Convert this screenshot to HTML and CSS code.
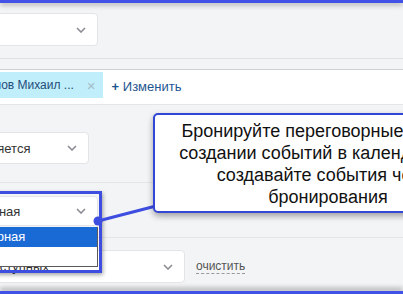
FILE: index.html
```html
<!DOCTYPE html>
<html>
<head>
  <title>Бронирование переговорных</title>
  <link rel="stylesheet" href="styles.css">
</head>
<body>
  <div class="frame-top"></div>

  <div class="section section-top">
    <div class="select select-top">
      <span class="select-text">Основной</span>
      <svg class="chevron" width="10" height="6" viewBox="0 0 10 6"><path d="M1 1l4 4 4-4" fill="none" stroke="#8a8d93" stroke-width="1.6"/></svg>
    </div>
  </div>
  <div class="band"></div>

  <div class="section section-white">
    <div class="chip">
      <span class="chip-text">Иванов Михаил ...</span>
      <span class="chip-close">×</span>
    </div>
    <a class="change-link" href="#"><b>+</b> Изменить</a>
  </div>

  <div class="section section-form">
    <div class="row row-repeat">
      <div class="select select-repeat">
        <span class="select-text">Не повторяется</span>
        <svg class="chevron" width="10" height="6" viewBox="0 0 10 6"><path d="M1 1l4 4 4-4" fill="none" stroke="#8a8d93" stroke-width="1.6"/></svg>
      </div>
    </div>

    <div class="row row-type">
      <div class="hl-wrap">
        <div class="select select-type">
          <span class="select-text">Переговорная</span>
          <svg class="chevron" width="10" height="6" viewBox="0 0 10 6"><path d="M1 1l4 4 4-4" fill="none" stroke="#8a8d93" stroke-width="1.6"/></svg>
        </div>
        <div class="menu">
          <div class="menu-item active">Переговорная</div>
          <div class="menu-item"></div>
        </div>
        <div class="hl-frame"></div>
      </div>
    </div>

    <div class="row row-room">
      <div class="select select-room">
        <span class="select-text">Из доступных</span>
        <svg class="chevron" width="10" height="6" viewBox="0 0 10 6"><path d="M1 1l4 4 4-4" fill="none" stroke="#8a8d93" stroke-width="1.6"/></svg>
      </div>
      <a class="clear-link" href="#">очистить</a>
    </div>
  </div>

  <div class="frame-bottom"></div>

  <!-- annotation -->
  <svg class="pointer" width="403" height="294" viewBox="0 0 403 294">
    <line x1="98" y1="221" x2="156" y2="206" stroke="#3d4de0" stroke-width="3"/>
    <circle cx="98" cy="221" r="4.5" fill="#3d4de0"/>
  </svg>
  <div class="callout">
    Бронируйте переговорные уже при<br>
    создании событий в календаре или<br>
    создавайте события через<br>
    бронирования
  </div>
</body>
</html>
```

FILE: styles.css
```css
body {
  margin: 0;
  width: 403px;
  height: 294px;
  overflow: hidden;
  position: relative;
  font-family: "Liberation Sans", Arial, sans-serif;
  font-size: 13px;
  color: #333333;
  background-color: #f3f4f6;
}

.frame-top {
  height: 3px;
  background-color: #4352e6;
  box-shadow: 0 2px 5px rgba(0, 0, 0, 0.35);
  position: relative;
  z-index: 2;
}

.frame-bottom {
  height: 4px;
  background-color: #4352e6;
  box-shadow: 0 -3px 5px rgba(0, 0, 0, 0.3);
  position: relative;
  z-index: 2;
}

.section-top {
  padding: 10px 0 12px;
  border-bottom: 1px solid #dfe1e4;
}

.band {
  height: 10px;
  border-bottom: 1px solid #cdd0d4;
}

.section-white {
  background-color: #ffffff;
  height: 32px;
  padding-top: 2px;
  border-bottom: 1px solid #e3e5e8;
  display: flex;
  align-items: flex-start;
}

.select {
  background-color: #ffffff;
  border: 1px solid #e2e4e8;
  border-radius: 4px;
  box-sizing: border-box;
  display: flex;
  align-items: center;
  justify-content: space-between;
  padding: 0 11px 0 10px;
  white-space: nowrap;
}

.chevron {
  flex: none;
}

.select-top {
  height: 33px;
  width: 218px;
  margin-left: -120px;
}

.chip {
  height: 26px;
  background-color: #c0eefb;
  display: flex;
  align-items: center;
  padding: 0 7px 0 8px;
  margin-left: -35px;
  font-size: 12px;
  color: #1f4c7a;
  white-space: nowrap;
}

.chip-close {
  color: #a6bcc7;
  font-size: 15px;
  margin-left: 13px;
}

.change-link {
  margin-left: 9px;
  height: 26px;
  line-height: 30px;
  color: #1d5590;
  text-decoration: none;
}

.row {
  border-bottom: 1px solid #e3e5e8;
}

.row-repeat {
  padding: 27px 0 18px;
}

.select-repeat {
  height: 32px;
  width: 160px;
  margin-left: -71px;
  padding-left: 6px;
}

.row-type {
  padding: 13px 0 11px;
}

.hl-wrap {
  position: relative;
  width: 180px;
  margin-left: -82px;
}

.select-type {
  height: 30px;
  padding-left: 16px;
}

.menu {
  position: absolute;
  left: 0;
  right: 0;
  top: 31px;
  background-color: #ffffff;
  border: 1px solid #5a5a5a;
  border-top: none;
  z-index: 3;
}

.menu-item {
  height: 19px;
  line-height: 19px;
  padding-left: 21px;
}

.menu-item.active {
  height: 20px;
  line-height: 20px;
  background-color: #1a6ad6;
  color: #ffffff;
}

.hl-frame {
  position: absolute;
  left: -6px;
  right: -4px;
  top: -5px;
  height: 76px;
  border: 3px solid #3d4de0;
  box-shadow: 1px 2px 4px rgba(0, 0, 0, 0.35);
  z-index: 4;
}

.row-room {
  border-bottom: none;
  padding: 12px 0 8px;
  display: flex;
  align-items: center;
}

.select-room {
  height: 33px;
  width: 230px;
  margin-left: -45px;
}

.clear-link {
  margin-left: 11px;
  font-size: 12px;
  color: #555555;
  text-decoration: none;
  border-bottom: 1px dashed #999999;
  line-height: 14px;
}

.pointer {
  position: absolute;
  left: 0;
  top: 0;
  z-index: 5;
}

.callout {
  position: absolute;
  left: 153px;
  top: 113px;
  width: 350px;
  box-sizing: border-box;
  padding: 5px 0 3px;
  background-color: #ffffff;
  border: 2px solid #3346d6;
  border-radius: 5px;
  box-shadow: 0 3px 6px rgba(0, 0, 0, 0.35);
  font-family: "Liberation Sans", Arial, sans-serif;
  font-size: 18px;
  line-height: 22px;
  color: #111111;
  text-align: center;
  z-index: 6;
}
```
